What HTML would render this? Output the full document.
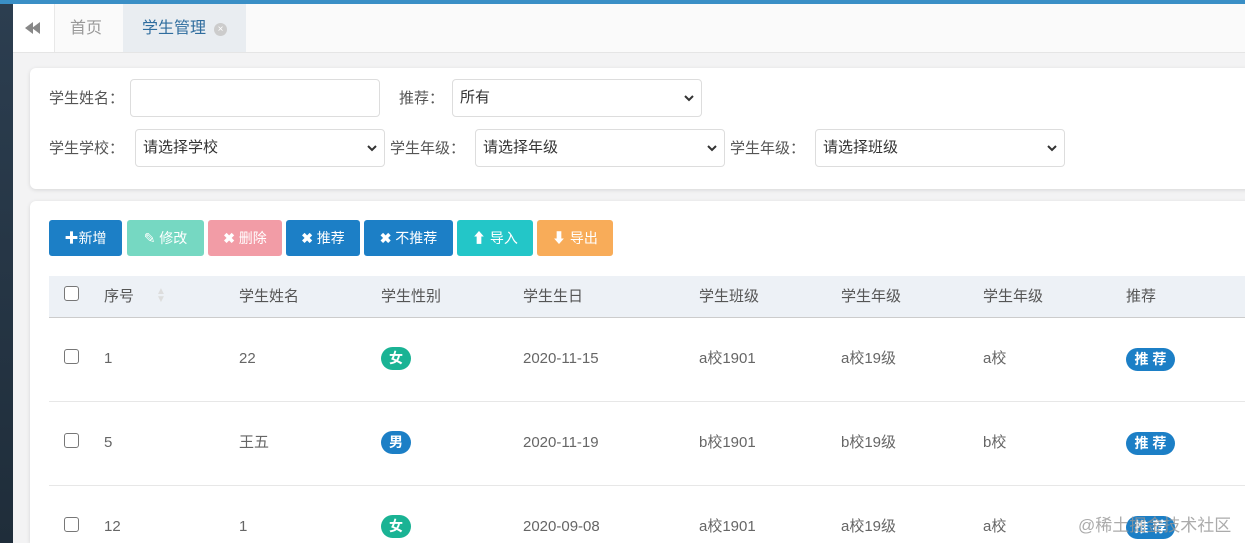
<!DOCTYPE html><html><head><meta charset="utf-8"><style>
*{box-sizing:border-box;margin:0;padding:0}
html,body{width:1245px;height:543px;overflow:hidden}
body{background:#f3f3f4;font-family:"Liberation Sans","Noto Sans CJK SC",sans-serif;font-size:15px;line-height:20px;color:#555;position:relative}
.a{position:absolute;white-space:nowrap}
.side{left:0;top:0;width:13px;height:543px;background:linear-gradient(#2c3e50,#1f2d3a)}
.topbar{left:0;top:0;width:1245px;height:4px;background:#3a8fc6}
.tabs{left:13px;top:4px;width:1232px;height:49px;background:#fafafa;border-bottom:1px solid #e5e5e5}
.card{background:#fff;border-radius:6px;box-shadow:0 1px 4px rgba(0,0,0,.12)}
.inp{border:1px solid #ddd;border-radius:4px;background:#fff;height:38px;padding-left:7px;padding-top:8px;color:#333}
.inp svg{position:absolute;right:6px;top:14px}
.btn{top:220px;height:36px;border-radius:3px;color:#fff;font-size:14px;line-height:36px;text-align:center}
.th{top:287px;color:#555}
.c{color:#666}
.cb{width:15px;height:15px;border:1px solid #777;border-radius:3px;background:#fff}
.badge{height:23px;border-radius:12px;color:#fff;font-weight:bold;font-size:14px;line-height:23px;text-align:center}
</style></head><body>
<div class="a side"></div><div class="a topbar"></div>
<div class="a tabs">
 <div class="a" style="left:0;top:0;width:42px;height:48px;background:#fff;border-right:1px solid #e8e8e8">
  <svg class="a" style="left:12px;top:18px" width="16" height="12"><path d="M8 0L0 6L8 12ZM15 0L7 6L15 12Z" fill="#888"/></svg></div>
 <div class="a" style="left:57px;top:15px;color:#999;font-size:16px">首页</div>
 <div class="a" style="left:110px;top:0;width:123px;height:48px;background:#e9edf1"></div>
 <div class="a" style="left:129px;top:15px;color:#2f6d9e;font-size:16px">学生管理</div>
 <div class="a" style="left:201px;top:19px;width:13px;height:13px;border-radius:50%;background:#ccc;color:#fff;font-size:10px;line-height:13px;text-align:center">×</div>
</div>
<div class="a card" style="left:30px;top:68px;width:1230px;height:121px"></div>
<div class="a" style="left:49px;top:89px">学生姓名：</div>
<div class="a inp" style="left:130px;top:79px;width:250px"></div>
<div class="a" style="left:399px;top:89px">推荐：</div>
<div class="a inp" style="left:452px;top:79px;width:250px">所有<svg width="12" height="9"><path d="M2 2L6 6L10 2" stroke="#333" stroke-width="2" fill="none"/></svg></div>
<div class="a" style="left:49px;top:139px">学生学校：</div>
<div class="a inp" style="left:135px;top:129px;width:250px">请选择学校<svg width="12" height="9"><path d="M2 2L6 6L10 2" stroke="#333" stroke-width="2" fill="none"/></svg></div>
<div class="a" style="left:390px;top:139px">学生年级：</div>
<div class="a inp" style="left:475px;top:129px;width:250px">请选择年级<svg width="12" height="9"><path d="M2 2L6 6L10 2" stroke="#333" stroke-width="2" fill="none"/></svg></div>
<div class="a" style="left:730px;top:139px">学生年级：</div>
<div class="a inp" style="left:815px;top:129px;width:250px">请选择班级<svg width="12" height="9"><path d="M2 2L6 6L10 2" stroke="#333" stroke-width="2" fill="none"/></svg></div>
<div class="a card" style="left:30px;top:201px;width:1230px;height:342px;border-bottom-left-radius:0"></div>
<div class="a btn" style="left:49px;width:73px;background:#1c7fc6"><b>✚</b>新增</div>
<div class="a btn" style="left:127px;width:77px;background:#76d8c2">✎ 修改</div>
<div class="a btn" style="left:208px;width:74px;background:#f29ca6"><b>✖</b> 删除</div>
<div class="a btn" style="left:286px;width:74px;background:#1c7fc6"><b>✖</b> 推荐</div>
<div class="a btn" style="left:364px;width:89px;background:#1c7fc6"><b>✖</b> 不推荐</div>
<div class="a btn" style="left:457px;width:76px;background:#23c6c8"><b>⬆</b> 导入</div>
<div class="a btn" style="left:537px;width:76px;background:#f8ac59"><b>⬇</b> 导出</div>
<div class="a" style="left:49px;top:276px;width:1196px;height:42px;background:#edf1f6;border-bottom:1px solid #ccc"></div>
<div class="a cb" style="left:64px;top:286px"></div>
<div class="a th" style="left:104px">序号</div><div class="a" style="left:156px;top:288px;color:#ddd;font-size:10px;line-height:8px">▲<br>▼</div>
<div class="a th" style="left:239px">学生姓名</div><div class="a th" style="left:381px">学生性别</div><div class="a th" style="left:523px">学生生日</div><div class="a th" style="left:699px">学生班级</div><div class="a th" style="left:841px">学生年级</div><div class="a th" style="left:983px">学生年级</div><div class="a th" style="left:1126px">推荐</div>
<div class="a" style="left:49px;top:401px;width:1196px;height:1px;background:#e7e7e7"></div>
<div class="a" style="left:49px;top:485px;width:1196px;height:1px;background:#e7e7e7"></div>

<div class="a cb" style="left:64px;top:349px"></div>
<div class="a c" style="left:104px;top:349px">1</div><div class="a c" style="left:239px;top:349px">22</div>
<div class="a badge" style="left:381px;top:347px;width:30px;background:#1ab394">女</div>
<div class="a c" style="left:523px;top:349px">2020-11-15</div><div class="a c" style="left:699px;top:349px">a校1901</div><div class="a c" style="left:841px;top:349px">a校19级</div><div class="a c" style="left:983px;top:349px">a校</div>
<div class="a badge" style="left:1126px;top:348px;width:49px;background:#1c7fc6">推 荐</div>

<div class="a cb" style="left:64px;top:433px"></div>
<div class="a c" style="left:104px;top:433px">5</div><div class="a c" style="left:239px;top:433px">王五</div>
<div class="a badge" style="left:381px;top:431px;width:30px;background:#1c7fc6">男</div>
<div class="a c" style="left:523px;top:433px">2020-11-19</div><div class="a c" style="left:699px;top:433px">b校1901</div><div class="a c" style="left:841px;top:433px">b校19级</div><div class="a c" style="left:983px;top:433px">b校</div>
<div class="a badge" style="left:1126px;top:432px;width:49px;background:#1c7fc6">推 荐</div>

<div class="a cb" style="left:64px;top:517px"></div>
<div class="a c" style="left:104px;top:517px">12</div><div class="a c" style="left:239px;top:517px">1</div>
<div class="a badge" style="left:381px;top:515px;width:30px;background:#1ab394">女</div>
<div class="a c" style="left:523px;top:517px">2020-09-08</div><div class="a c" style="left:699px;top:517px">a校1901</div><div class="a c" style="left:841px;top:517px">a校19级</div><div class="a c" style="left:983px;top:517px">a校</div>
<div class="a badge" style="left:1126px;top:516px;width:49px;background:#1c7fc6">推 荐</div>
<div class="a" style="left:1078px;top:516px;color:rgba(150,150,150,.8);font-size:17px">@稀土掘金技术社区</div>
</body></html>
